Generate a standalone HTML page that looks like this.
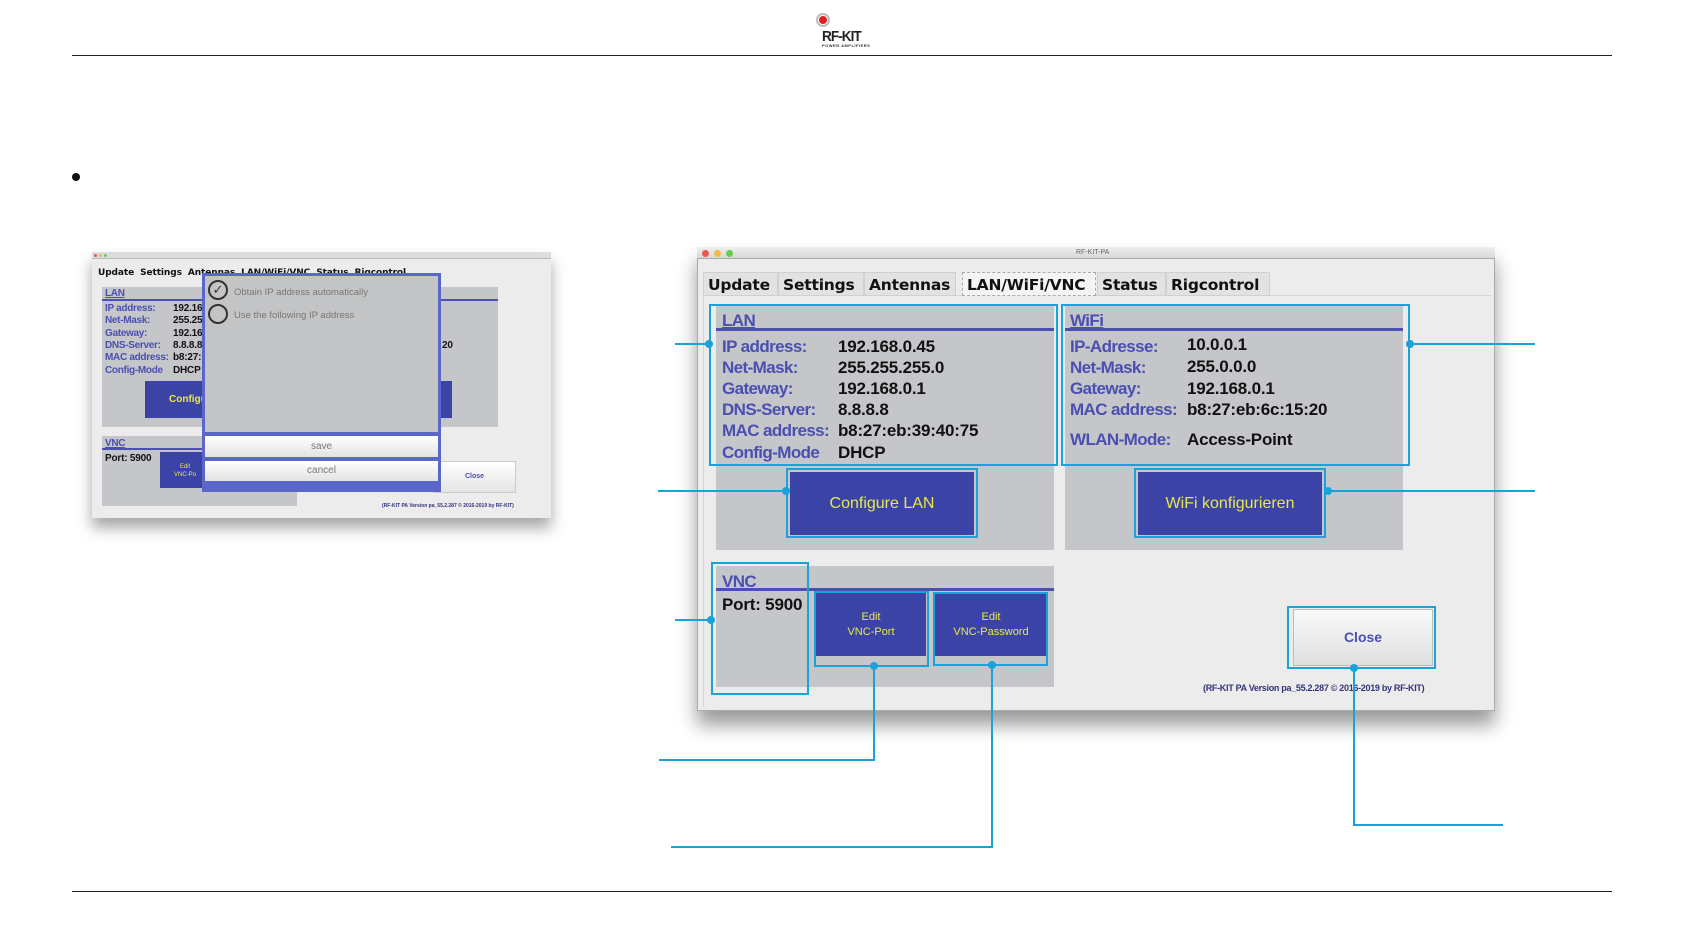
<!DOCTYPE html>
<html><head><meta charset="utf-8"><style>
*{margin:0;padding:0;box-sizing:border-box}
body{width:1684px;height:947px;background:#fff;position:relative;overflow:hidden;font-family:"Liberation Sans",Arial,sans-serif}
.a{position:absolute}
.hl{position:absolute;background:#1aa3d9}
.dot{position:absolute;width:8px;height:8px;border-radius:50%;background:#1aa3d9}
.cy{position:absolute;border:2px solid #1aa3d9}
.lbl{position:absolute;color:#4a4fb0;font-weight:bold;font-size:17px;letter-spacing:-0.6px;white-space:nowrap}
.val{position:absolute;color:#111;font-weight:bold;font-size:17px;white-space:nowrap;letter-spacing:-0.2px}
.tab{position:absolute;top:272px;height:24px;font-family:"DejaVu Sans",sans-serif;font-weight:bold;font-size:15.5px;letter-spacing:-0.2px;line-height:24px;padding-left:4px;background:#e2e2e2;border:1px solid #d0d0d0;color:#111;white-space:nowrap;overflow:hidden}
.btn{position:absolute;background:#3b44a6;color:#e8e84a;text-align:center}
.s .lbl{font-size:10px;letter-spacing:-0.3px}
.s .val{font-size:10px}
</style></head><body>
<!-- header -->
<div class="a" style="left:72px;top:55px;width:1540px;height:1px;background:#222"></div>
<div class="a" style="left:72px;top:891px;width:1540px;height:1px;background:#222"></div>
<div class="a" style="left:816px;top:13px;width:14px;height:14px;border-radius:50%;border:2px solid #bbb"></div>
<div class="a" style="left:819px;top:16px;width:8px;height:8px;border-radius:50%;background:#e02020"></div>
<div class="a" style="left:822px;top:28px;font-weight:bold;font-size:15px;letter-spacing:-1px;color:#222;transform:scaleX(0.9);transform-origin:left">RF-KIT</div>
<div class="a" style="left:822px;top:43px;font-size:4px;font-weight:bold;color:#333;letter-spacing:0.5px">POWER AMPLIFIERS</div>
<div class="a" style="left:72px;top:173px;width:8px;height:8px;border-radius:50%;background:#111"></div>

<!-- small window -->
<div class="a s" style="left:92px;top:252px;width:459px;height:266px;background:#ececec;box-shadow:0 10px 14px rgba(0,0,0,.35)"></div>
<div class="a" style="left:92px;top:252px;width:459px;height:7px;background:#ddd;border-bottom:1px solid #bbb"></div>
<div class="a" style="left:94px;top:254px;width:3px;height:3px;border-radius:50%;background:#e55"></div>
<div class="a" style="left:99px;top:254px;width:3px;height:3px;border-radius:50%;background:#eb4"></div>
<div class="a" style="left:104px;top:254px;width:3px;height:3px;border-radius:50%;background:#6c5"></div>
<div class="a" style="left:98px;top:268px;font-family:'DejaVu Sans',sans-serif;font-weight:bold;font-size:9px;white-space:nowrap;color:#111;letter-spacing:-0.1px">Update &nbsp;Settings &nbsp;Antennas &nbsp;LAN/WiFi/VNC &nbsp;Status &nbsp;Rigcontrol</div>
<div class="a" style="left:102px;top:287px;width:396px;height:140px;background:#c4c6c9"></div>
<div class="a" style="left:102px;top:299px;width:396px;height:2px;background:#4a4fb0"></div>
<div class="s">
<div class="lbl" style="left:105px;top:288px;text-decoration:underline">LAN</div>
<div class="lbl" style="left:105px;top:303px">IP address:</div><div class="val" style="left:173px;top:303px">192.16</div>
<div class="lbl" style="left:105px;top:315px">Net-Mask:</div><div class="val" style="left:173px;top:315px">255.25</div>
<div class="lbl" style="left:105px;top:328px">Gateway:</div><div class="val" style="left:173px;top:328px">192.16</div>
<div class="lbl" style="left:105px;top:340px">DNS-Server:</div><div class="val" style="left:173px;top:340px">8.8.8.8</div>
<div class="lbl" style="left:105px;top:352px">MAC address:</div><div class="val" style="left:173px;top:352px">b8:27:</div>
<div class="lbl" style="left:105px;top:365px">Config-Mode</div><div class="val" style="left:173px;top:365px">DHCP</div>
<div class="val" style="left:442px;top:340px">20</div>
</div>
<div class="btn" style="left:145px;top:381px;width:307px;height:37px;font-size:10px;line-height:37px;text-align:left;padding-left:24px;font-weight:bold">Configu</div>
<div class="a" style="left:102px;top:436px;width:195px;height:70px;background:#c4c6c9"></div>
<div class="a" style="left:102px;top:448px;width:195px;height:2px;background:#4a4fb0"></div>
<div class="s"><div class="lbl" style="left:105px;top:438px;text-decoration:underline">VNC</div>
<div class="val" style="left:105px;top:453px">Port: 5900</div></div>
<div class="btn" style="left:160px;top:452px;width:50px;height:36px;font-size:6px;padding-top:11px;line-height:8px">Edit<br>VNC-Po</div>
<div class="a" style="left:433px;top:461px;width:83px;height:32px;background:linear-gradient(#fff,#e4e4e4);border:1px solid #ccc;color:#4a4fb0;font-weight:bold;font-size:7px;text-align:center;line-height:30px">Close</div>
<div class="a" style="left:382px;top:503px;font-size:5px;font-weight:bold;color:#33337a;white-space:nowrap">(RF-KIT PA Version pa_55.2.287 © 2016-2019 by RF-KIT)</div>
<!-- dialog -->
<div class="a" style="left:202px;top:273px;width:239px;height:219px;background:#5a66c8"></div>
<div class="a" style="left:205px;top:276px;width:233px;height:156px;background:#c3c4c6"></div>
<div class="a" style="left:208px;top:280px;width:20px;height:20px;border-radius:50%;border:2px solid #333;color:#333;font-size:13px;line-height:16px;text-align:center">✓</div>
<div class="a" style="left:208px;top:304px;width:20px;height:20px;border-radius:50%;border:2px solid #333"></div>
<div class="a" style="left:234px;top:287px;font-size:9.5px;color:#777">Obtain IP address automatically</div>
<div class="a" style="left:234px;top:310px;font-size:9.5px;color:#777">Use the following IP address</div>
<div class="a" style="left:205px;top:436px;width:233px;height:21px;background:linear-gradient(#fff,#e2e2e2);color:#777;font-size:10px;text-align:center;line-height:21px">save</div>
<div class="a" style="left:205px;top:461px;width:233px;height:20px;background:linear-gradient(#fff,#e2e2e2);color:#777;font-size:10px;text-align:center;line-height:20px">cancel</div>

<!-- big window -->
<div class="a" style="left:697px;top:247px;width:798px;height:464px;background:#ececec;border:1px solid #aaa;box-shadow:0 14px 18px rgba(0,0,0,.4)"></div>
<div class="a" style="left:697px;top:247px;width:798px;height:12px;background:linear-gradient(#eee,#d8d8d8);border-bottom:1px solid #aaa"></div>
<div class="a" style="left:702px;top:250px;width:7px;height:7px;border-radius:50%;background:#e55"></div>
<div class="a" style="left:714px;top:250px;width:7px;height:7px;border-radius:50%;background:#eb4"></div>
<div class="a" style="left:726px;top:250px;width:7px;height:7px;border-radius:50%;background:#6c5"></div>
<div class="a" style="left:1076px;top:249px;font-size:7px;color:#666">RF-KIT-PA</div>
<div class="a" style="left:703px;top:295px;width:788px;height:412px;border-top:1px solid #d4d4d4;border-left:1px solid #d4d4d4"></div>
<div class="tab" style="left:703px;width:75px">Update</div>
<div class="tab" style="left:778px;width:86px">Settings</div>
<div class="tab" style="left:864px;width:92px">Antennas</div>
<div class="tab" style="left:962px;width:134px;background:#f4f4f4;border:1px dashed #aaa">LAN/WiFi/VNC</div>
<div class="tab" style="left:1097px;width:69px">Status</div>
<div class="tab" style="left:1166px;width:104px">Rigcontrol</div>

<div class="a" style="left:716px;top:306px;width:338px;height:244px;background:#c4c6c9"></div>
<div class="a" style="left:716px;top:328px;width:338px;height:3px;background:#4a4fb0"></div>
<div class="lbl" style="left:722px;top:311px;text-decoration:underline">LAN</div>
<div class="lbl" style="left:722px;top:337px">IP address:</div><div class="val" style="left:838px;top:337px">192.168.0.45</div>
<div class="lbl" style="left:722px;top:358px">Net-Mask:</div><div class="val" style="left:838px;top:358px">255.255.255.0</div>
<div class="lbl" style="left:722px;top:379px">Gateway:</div><div class="val" style="left:838px;top:379px">192.168.0.1</div>
<div class="lbl" style="left:722px;top:400px">DNS-Server:</div><div class="val" style="left:838px;top:400px">8.8.8.8</div>
<div class="lbl" style="left:722px;top:421px">MAC address:</div><div class="val" style="left:838px;top:421px">b8:27:eb:39:40:75</div>
<div class="lbl" style="left:722px;top:443px">Config-Mode</div><div class="val" style="left:838px;top:443px">DHCP</div>
<div class="btn" style="left:790px;top:472px;width:184px;height:63px;font-size:16px;line-height:63px">Configure LAN</div>

<div class="a" style="left:1065px;top:306px;width:338px;height:244px;background:#c4c6c9"></div>
<div class="a" style="left:1065px;top:328px;width:338px;height:3px;background:#4a4fb0"></div>
<div class="lbl" style="left:1070px;top:311px;text-decoration:underline">WiFi</div>
<div class="lbl" style="left:1070px;top:337px">IP-Adresse:</div><div class="val" style="left:1187px;top:335px">10.0.0.1</div>
<div class="lbl" style="left:1070px;top:358px">Net-Mask:</div><div class="val" style="left:1187px;top:357px">255.0.0.0</div>
<div class="lbl" style="left:1070px;top:379px">Gateway:</div><div class="val" style="left:1187px;top:379px">192.168.0.1</div>
<div class="lbl" style="left:1070px;top:400px">MAC address:</div><div class="val" style="left:1187px;top:400px">b8:27:eb:6c:15:20</div>
<div class="lbl" style="left:1070px;top:430px">WLAN-Mode:</div><div class="val" style="left:1187px;top:430px">Access-Point</div>
<div class="btn" style="left:1138px;top:472px;width:184px;height:63px;font-size:16px;line-height:63px">WiFi konfigurieren</div>

<div class="a" style="left:716px;top:566px;width:338px;height:121px;background:#c4c6c9"></div>
<div class="a" style="left:716px;top:588px;width:338px;height:3px;background:#4a4fb0"></div>
<div class="lbl" style="left:722px;top:572px;text-decoration:underline">VNC</div>
<div class="val" style="left:722px;top:595px">Port: 5900</div>
<div class="btn" style="left:816px;top:592px;width:110px;height:64px;font-size:11px;line-height:15px;padding-top:18px">Edit<br>VNC-Port</div>
<div class="btn" style="left:935px;top:593px;width:112px;height:63px;font-size:11px;line-height:15px;padding-top:17px">Edit<br>VNC-Password</div>

<div class="a" style="left:1293px;top:609px;width:140px;height:57px;background:linear-gradient(#fafafa,#e0e0e0);border:1px solid #bbb;color:#4a4fb0;font-weight:bold;font-size:14px;text-align:center;line-height:55px">Close</div>
<div class="a" style="left:1203px;top:683px;font-size:9px;font-weight:bold;color:#33337a;white-space:nowrap;letter-spacing:-0.3px">(RF-KIT PA Version pa_55.2.287 © 2016-2019 by RF-KIT)</div>

<!-- cyan callouts -->
<div class="cy" style="left:709px;top:304px;width:349px;height:162px"></div>
<div class="cy" style="left:1061px;top:304px;width:349px;height:162px"></div>
<div class="cy" style="left:786px;top:468px;width:192px;height:70px"></div>
<div class="cy" style="left:1134px;top:468px;width:192px;height:70px"></div>
<div class="cy" style="left:711px;top:562px;width:98px;height:133px"></div>
<div class="cy" style="left:814px;top:591px;width:115px;height:76px"></div>
<div class="cy" style="left:933px;top:592px;width:115px;height:74px"></div>
<div class="cy" style="left:1287px;top:606px;width:149px;height:63px"></div>

<div class="hl" style="left:675px;top:343px;width:34px;height:2px"></div><div class="dot" style="left:705px;top:340px"></div>
<div class="hl" style="left:1410px;top:343px;width:125px;height:2px"></div><div class="dot" style="left:1406px;top:340px"></div>
<div class="hl" style="left:658px;top:490px;width:128px;height:2px"></div><div class="dot" style="left:782px;top:487px"></div>
<div class="hl" style="left:1328px;top:490px;width:207px;height:2px"></div><div class="dot" style="left:1324px;top:487px"></div>
<div class="hl" style="left:675px;top:619px;width:36px;height:2px"></div><div class="dot" style="left:707px;top:616px"></div>
<div class="hl" style="left:873px;top:666px;width:2px;height:95px"></div><div class="dot" style="left:870px;top:662px"></div>
<div class="hl" style="left:659px;top:759px;width:216px;height:2px"></div>
<div class="hl" style="left:991px;top:665px;width:2px;height:183px"></div><div class="dot" style="left:988px;top:661px"></div>
<div class="hl" style="left:671px;top:846px;width:322px;height:2px"></div>
<div class="hl" style="left:1353px;top:668px;width:2px;height:158px"></div><div class="dot" style="left:1350px;top:664px"></div>
<div class="hl" style="left:1353px;top:824px;width:150px;height:2px"></div>
</body></html>
